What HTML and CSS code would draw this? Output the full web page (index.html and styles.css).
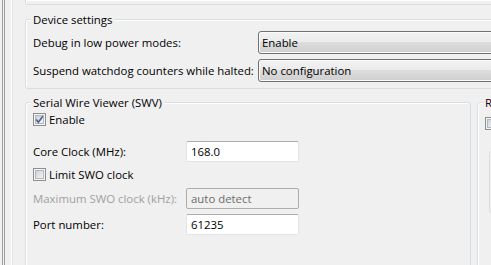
FILE: index.html
```html
<!DOCTYPE html>
<html>
<head>
<meta charset="utf-8">
<link rel="stylesheet" href="styles.css">
</head>
<body>
<div class="window">
  <div class="edge"></div>
  <div class="main">
    <div class="group group-top"></div>
    <div class="group group-device">
      <div class="group-title">Device settings</div>
      <div class="device-grid">
        <span class="label">Debug in low power modes:</span>
        <div class="combo">Enable</div>
        <span class="label">Suspend watchdog counters while halted:</span>
        <div class="combo">No configuration</div>
      </div>
    </div>
    <div class="lower">
      <div class="group group-swv">
        <div class="group-title">Serial Wire Viewer (SWV)</div>
        <div class="swv-rows">
          <div class="check-row row-enable">
            <svg class="checkbox" width="13" height="13" viewBox="0 0 13 13">
              <defs>
                <linearGradient id="cg1" x1="0" y1="0" x2="1" y2="1">
                  <stop offset="0" stop-color="#cbcfd5"/>
                  <stop offset="1" stop-color="#f7f7f7"/>
                </linearGradient>
              </defs>
              <rect x="0.5" y="0.5" width="12" height="12" fill="#f4f4f4" stroke="#8e8f8f"/>
              <rect x="2.5" y="2.5" width="8" height="8" fill="url(#cg1)" stroke="#b3b8bd"/>
              <path d="M3.2 6.4 L5.4 9.2 L9.8 3.2" fill="none" stroke="#4b5d96" stroke-width="1.6"/>
            </svg>
            <span class="label">Enable</span>
          </div>
          <div class="field-row row-core">
            <span class="label">Core Clock (MHz):</span>
            <div class="textbox">168.0</div>
          </div>
          <div class="check-row row-limit">
            <svg class="checkbox" width="13" height="13" viewBox="0 0 13 13">
              <defs>
                <linearGradient id="cg2" x1="0" y1="0" x2="1" y2="1">
                  <stop offset="0" stop-color="#cbcfd5"/>
                  <stop offset="1" stop-color="#f7f7f7"/>
                </linearGradient>
              </defs>
              <rect x="0.5" y="0.5" width="12" height="12" fill="#f4f4f4" stroke="#8e8f8f"/>
              <rect x="2.5" y="2.5" width="8" height="8" fill="url(#cg2)" stroke="#b3b8bd"/>
            </svg>
            <span class="label">Limit SWO clock</span>
          </div>
          <div class="field-row row-max">
            <span class="label disabled">Maximum SWO clock (kHz):</span>
            <div class="textbox textbox-disabled">auto detect</div>
          </div>
          <div class="field-row row-port">
            <span class="label">Port number:</span>
            <div class="textbox">61235</div>
          </div>
        </div>
      </div>
      <div class="group group-r">
        <div class="group-title title-r">R</div>
        <svg class="checkbox checkbox-r" width="13" height="13" viewBox="0 0 13 13">
          <defs>
            <linearGradient id="cg3" x1="0" y1="0" x2="1" y2="1">
              <stop offset="0" stop-color="#cbcfd5"/>
              <stop offset="1" stop-color="#f7f7f7"/>
            </linearGradient>
          </defs>
          <rect x="0.5" y="0.5" width="12" height="12" fill="#f4f4f4" stroke="#8e8f8f"/>
          <rect x="2.5" y="2.5" width="8" height="8" fill="url(#cg3)" stroke="#b3b8bd"/>
        </svg>
        <div class="inner-box"></div>
      </div>
    </div>
  </div>
</div>
</body>
</html>
```

FILE: styles.css
```css
html, body {
  margin: 0;
  padding: 0;
  background: #f0f0f0;
  overflow: hidden;
}
body {
  width: 491px;
  height: 265px;
  font-family: "Open Sans", "Noto Sans", sans-serif;
  font-size: 11.4px;
  line-height: 15px;
  color: #000;
}
.window {
  display: flex;
  height: 265px;
  overflow: hidden;
}
.edge {
  flex: 0 0 25px;
  background: linear-gradient(to right,
    #f0f0f0 0 2px, #a0a0a0 2px 3px, #f0f0f0 3px 4px, #a0a0a0 4px 5px,
    #f0f0f0 5px 11px, #ffffff 11px 12px, #e3e3e3 12px 13px, #f0f0f0 13px);
}
.main {
  flex: 0 0 auto;
  width: 600px;
}
.group {
  border: 1px solid #d5dfe5;
  border-radius: 3px;
  box-shadow: inset 1px 1px 0 #ffffff;
}
.group-top {
  height: 4px;
  border-top: none;
  border-top-left-radius: 0;
  margin-right: -10px;
}
.group-title {
  display: block;
  width: max-content;
  height: 15px;
  margin-top: -8px;
  margin-left: -2px;
  padding: 0 2px;
  background: #f0f0f0;
}
.group-device {
  margin-top: 14px;
  padding: 0 0 6px 7px;
  width: 520px;
}
.device-grid {
  display: grid;
  grid-template-columns: 225px 1fr;
  row-gap: 5px;
  margin-top: 4px;
  align-items: center;
}
.label {
  white-space: nowrap;
}
.label.disabled {
  color: #a0a0a0;
}
.combo {
  height: 21px;
  line-height: 21px;
  border: 1px solid #707070;
  border-radius: 3px;
  padding-left: 3px;
  background: linear-gradient(to bottom, #f2f2f2 0%, #ebebeb 50%, #dddddd 50%, #cfcfcf 100%);
  box-shadow: inset 0 0 0 1px #fcfcfc;
}
.lower {
  display: flex;
  gap: 6px;
  margin-top: 13px;
}
.group-swv {
  flex: 0 0 auto;
  width: 437px;
  height: 200px;
  padding-left: 7px;
}
.swv-rows {
  display: flex;
  flex-direction: column;
}
.check-row {
  display: flex;
  align-items: center;
  gap: 3px;
  height: 13px;
}
.checkbox {
  display: block;
  flex: 0 0 auto;
}
.row-enable {
  margin-top: 3px;
}
.field-row {
  display: grid;
  grid-template-columns: 153px 113px;
  align-items: center;
  height: 21px;
}
.row-core {
  margin-top: 15px;
}
.row-limit {
  margin-top: 6px;
}
.row-max {
  margin-top: 7px;
}
.row-port {
  margin-top: 5px;
}
.textbox {
  box-sizing: border-box;
  height: 21px;
  line-height: 19px;
  border: 1px solid #e2e3ea;
  border-top-color: #abadb3;
  border-radius: 2px;
  background: #ffffff;
  padding-left: 4px;
  white-space: nowrap;
}
.textbox-disabled {
  background: #f0f0f0;
  border-color: #adadad;
  color: #6d6d6d;
}
.group-r {
  flex: 0 0 auto;
  width: 60px;
  height: 200px;
  padding-left: 7px;
}
.title-r {
  color: #1a0010;
}
.checkbox-r {
  margin-top: 7px;
}
.inner-box {
  margin-top: 21px;
  margin-left: 4px;
  height: 60px;
  border: 1px solid #d5dfe5;
  border-radius: 3px;
}
```
